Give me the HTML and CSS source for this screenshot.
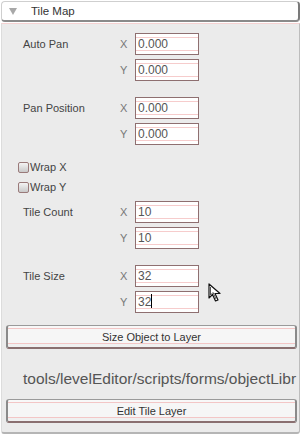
FILE: index.html
```html
<!DOCTYPE html>
<html lang="en">
<head>
  <meta charset="UTF-8" />
  <title>Tile Map</title>
  <link rel="stylesheet" href="styles.css">
</head>
<body>
  <div class="rollout">
    <div class="rollout-head">
      <span class="arrow"></span>
      <span class="title">Tile Map</span>
    </div>

    <div class="rollout-body">
      <div class="group">
        <div class="row"><span class="label">Auto Pan</span><span class="axis">X</span><div class="field">0.000</div></div>
        <div class="row"><span class="label"></span><span class="axis">Y</span><div class="field">0.000</div></div>
      </div>

      <div class="group spaced">
        <div class="row"><span class="label">Pan Position</span><span class="axis">X</span><div class="field">0.000</div></div>
        <div class="row"><span class="label"></span><span class="axis">Y</span><div class="field">0.000</div></div>
      </div>

      <div class="checks">
        <label class="check"><span class="box"></span>Wrap X</label>
        <label class="check"><span class="box"></span>Wrap Y</label>
      </div>

      <div class="group close">
        <div class="row"><span class="label">Tile Count</span><span class="axis">X</span><div class="field">10</div></div>
        <div class="row"><span class="label"></span><span class="axis">Y</span><div class="field">10</div></div>
      </div>

      <div class="group spaced">
        <div class="row"><span class="label">Tile Size</span><span class="axis">X</span><div class="field">32</div></div>
        <div class="row"><span class="label"></span><span class="axis">Y</span><div class="field">32<span class="caret"></span></div></div>
      </div>

      <button class="btn first">Size Object to Layer</button>

      <div class="path">tools/levelEditor/scripts/forms/objectLibr</div>

      <button class="btn">Edit Tile Layer</button>
    </div>
  </div>

  <svg class="pointer" width="14" height="20" viewBox="0 0 14 20">
    <path d="M1 1 L1 15 L4.5 11.5 L7.5 18 L10 17 L7 10.5 L12 10.5 Z" fill="#fff" stroke="#111" stroke-width="1.2" stroke-linejoin="round"/>
    <path d="M2.5 4 L2.5 12 L5 9.5 L8 16" fill="none" stroke="#555" stroke-width="1"/>
  </svg>
</body>
</html>
```

FILE: styles.css
```css
body {
  margin: 0;
  padding: 1px 0 0 1px;
  background: #fff;
  font-family: "Liberation Sans", Arial, sans-serif;
  font-size: 11px;
  color: #444;
}

.rollout {
  width: 299px;
}

.rollout-head {
  height: 18px;
  display: flex;
  align-items: center;
  background: #fff;
  border: 1px solid #cfcfcf;
  border-right: 2px solid #7a7a7a;
  border-bottom: 2px solid #8a8a8a;
  border-radius: 4px;
  color: #333;
  font-size: 11.5px;
}

.arrow {
  width: 0;
  height: 0;
  margin-left: 7px;
  border-left: 4px solid transparent;
  border-right: 4px solid transparent;
  border-top: 7px solid #a8a8a8;
}

.title {
  margin-left: 14px;
}

.rollout-body {
  margin-top: 1px;
  background: #ebebeb;
  border-top: 1px solid #f6d2d2;
  border-left: 1px solid #dcdcdc;
  border-right: 1px solid #bdbdbd;
  border-bottom: 2px solid #b5b5b5;
  border-radius: 0 0 3px 3px;
  padding: 9px 0 9px 0;
}

.group {
  display: flex;
  flex-direction: column;
  gap: 4px;
  padding-left: 21px;
}

.group.spaced {
  margin-top: 16px;
}

.group.close {
  margin-top: 4px;
}

.row {
  display: grid;
  grid-template-columns: 96px 16px 64px;
  align-items: center;
  height: 22px;
}

.axis {
  color: #777;
  padding-left: 1px;
}

.field {
  height: 20px;
  line-height: 21px;
  padding-left: 2px;
  border: 1px solid #8e6f70;
  font-size: 12px;
  color: #555;
  background:
    linear-gradient(#fff 0 3px, #f6cccc 3px 4px, #fff 4px calc(100% - 4px), #f6cccc calc(100% - 4px) calc(100% - 3px), #fff calc(100% - 3px));
}

.caret {
  display: inline-block;
  width: 1px;
  height: 14px;
  background: #000;
  vertical-align: -2px;
}

.checks {
  margin-top: 12px;
  padding-left: 16px;
  display: flex;
  flex-direction: column;
}

.check {
  display: flex;
  align-items: center;
  height: 20px;
}

.box {
  width: 9px;
  height: 9px;
  border: 1px solid #9a7a7a;
  border-radius: 2px;
  background: linear-gradient(#f4f4f4, #c9c9c9);
  margin-right: 1px;
}

.btn {
  display: block;
  width: 291px;
  height: 24px;
  margin: 0 0 0 4px;
  padding: 0;
  font-family: "Liberation Sans", Arial, sans-serif;
  font-size: 11px;
  color: #333;
  border: 1px solid #9a9a9a;
  border-left: 2px solid #8a8a8a;
  border-right: 2px solid #8a8a8a;
  border-bottom: 2px solid #8a6f70;
  border-radius: 3px;
  background:
    linear-gradient(#f8f8f8 0 2px, #f3c6c6 2px 3px, #f6f6f6 3px calc(100% - 4px), #f3c6c6 calc(100% - 4px) calc(100% - 3px), #f0f0f0 calc(100% - 3px));
}

.btn.first {
  margin-top: 12px;
}

.path {
  margin: 21px 0 0 21px;
  white-space: nowrap;
  font-size: 15.5px;
  color: #555;
  height: 29px;
}

.pointer {
  position: absolute;
  left: 208px;
  top: 283px;
}
```
